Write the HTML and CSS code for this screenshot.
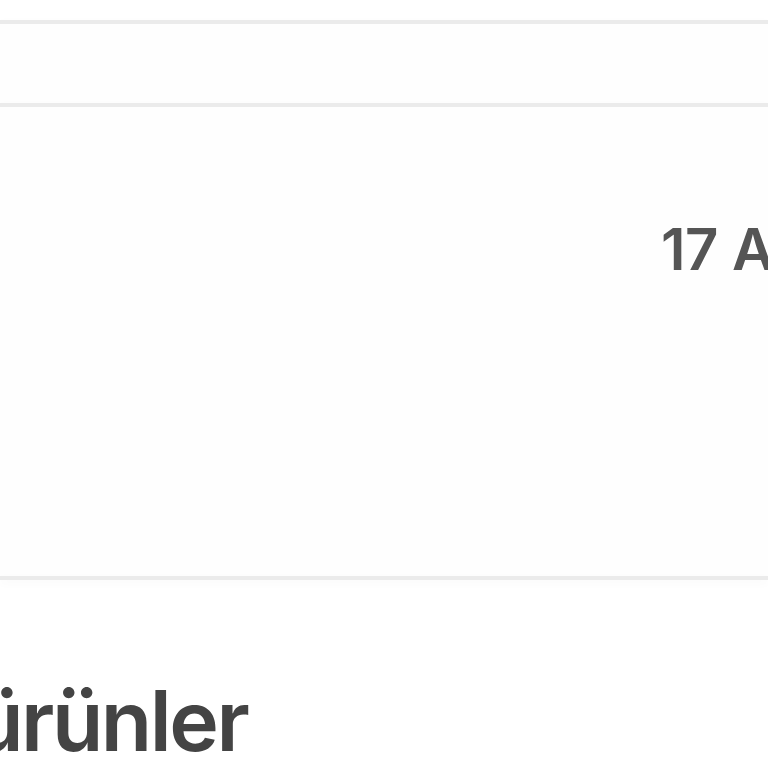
FILE: index.html
```html
<!DOCTYPE html>
<html lang="tr">
<head>
<meta charset="utf-8">
<title>Ürünler</title>
<link rel="stylesheet" href="styles.css">
</head>
<body>
  <div class="page">
    <div class="top-gap"></div>
    <div class="divider"></div>
    <section class="band"></section>
    <div class="divider"></div>
    <section class="info">
      <div class="date">17 Ağustos 2023</div>
    </section>
    <div class="divider"></div>
    <h2 class="heading">Benzer ürünler</h2>
  </div>
</body>
</html>
```
FILE: styles.css
```css
html, body {
  margin: 0;
  padding: 0;
  background: #ffffff;
  overflow: hidden;
  height: 768px;
}
.page {
  display: flex;
  flex-direction: column;
  font-family: Inter, "Noto Sans", sans-serif;
  width: 768px;
  overflow: hidden;
}
.top-gap {
  height: 20px;
}
.divider {
  height: 4px;
  background: #ebebeb;
  box-shadow: 0 3px 8px rgba(0, 0, 0, 0.035);
  flex: none;
}
.band {
  height: 79px;
  background: #fefefe;
}
.info {
  height: 469px;
  background: #fefefe;
  box-sizing: border-box;
  padding-top: 107px;
  padding-left: 661px;
}
.date {
  font-size: 58px;
  line-height: 70px;
  font-weight: 600;
  color: #555555;
  white-space: nowrap;
  letter-spacing: -0.5px;
}
.heading {
  margin: 91px 0 0 -317px;
  font-size: 84px;
  line-height: 100px;
  font-weight: 600;
  color: #444444;
  white-space: nowrap;
  letter-spacing: -2.5px;
}
```
